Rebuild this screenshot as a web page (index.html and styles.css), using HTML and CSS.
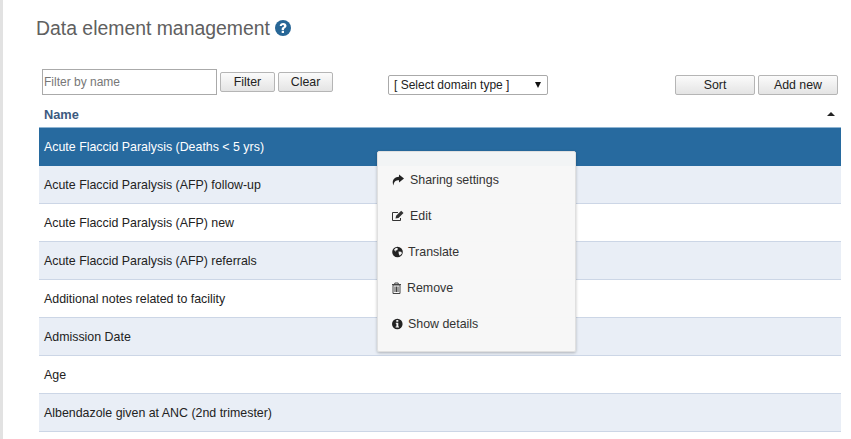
FILE: index.html
```html
<!DOCTYPE html>
<html lang="en">
<head>
    <meta charset="UTF-8">
    <title>Data element management</title>
    <link rel="stylesheet" href="styles.css">
</head>
<body>
    <div class="container">
        <h1 class="title">Data element management
            <svg class="help" viewBox="0 0 16 16"><circle cx="8" cy="8" r="8" fill="#276696"/><path d="M4.700 6C4.800 4.100 6.200 3 8.200 3c1.900 0 3.300 1.100 3.300 2.800 0 1.300-.8 2-1.700 2.500-.6.4-.8.6-.8 1.200v.4H6.700v-.7c0-1 .5-1.600 1.300-2.100.6-.4 1-.7 1-1.200 0-.6-.4-.9-1-.9-.7 0-1.100.4-1.200 1.100zM6.700 10.800h2.300v2.200H6.700z" fill="#fff"/></svg>
        </h1>
        <div class="toolbar">
            <div class="filter-group">
                <input type="text" class="filter-input" placeholder="Filter by name">
                <button class="btn btn-small">Filter</button>
                <button class="btn btn-small">Clear</button>
            </div>
            <div class="fake-select">[ Select domain type ]<span class="select-arrow"></span></div>
            <div class="action-group">
                <button class="btn btn-wide">Sort</button>
                <button class="btn btn-wide">Add new</button>
            </div>
        </div>
        <div class="list-head">
            <span>Name</span>
            <span class="sort-arrow"></span>
        </div>
        <div class="list">
            <div class="row selected">Acute Flaccid Paralysis (Deaths &lt; 5 yrs)</div>
            <div class="row">Acute Flaccid Paralysis (AFP) follow-up</div>
            <div class="row">Acute Flaccid Paralysis (AFP) new</div>
            <div class="row">Acute Flaccid Paralysis (AFP) referrals</div>
            <div class="row">Additional notes related to facility</div>
            <div class="row">Admission Date</div>
            <div class="row">Age</div>
            <div class="row">Albendazole given at ANC (2nd trimester)</div>
        </div>
    </div>

    <ul class="menu">
        <li>
            <svg class="icon" viewBox="0 0 12 12"><path d="M7 .5L12 4.500 7 8.500V6.200C4 6.200 1.800 7.300 1.500 11.500-.6 7 2 2.800 7 2.700z" fill="#222"/></svg>
            <span>Sharing settings</span>
        </li>
        <li>
            <svg class="icon" viewBox="0 0 12 12"><path d="M8.500 8v2.500H.5V2.500H6" fill="none" stroke="#333"/><path d="M3.500 8.500l.6-2.800L9.200.8l2.300 2.200-5 5z" fill="#333"/></svg>
            <span>Edit</span>
        </li>
        <li class="tight">
            <svg class="icon" viewBox="0 0 12 12"><circle cx="5.500" cy="6" r="5.300" fill="#222"/><path d="M2 3.800L4 1.800l2 .7-.8 1.800L3.500 4.500 3.700 6zM6.500 5.500l2.700.3.800 1.500-2.200 2.500L6.800 8z" fill="#f5f5f5"/></svg>
            <span>Translate</span>
        </li>
        <li class="tighter">
            <svg class="icon" viewBox="0 0 12 12"><path d="M0 2.500h9M2.800 2.500V1h3.400v1.500" fill="none" stroke="#444"/><path d="M1 3h7v8.500H1z" fill="none" stroke="#444"/><path d="M3 4.500v5.500M4.500 4.500v5.500M6 4.500v5.500" stroke="#444"/></svg>
            <span>Remove</span>
        </li>
        <li class="tight">
            <svg class="icon" viewBox="0 0 12 12"><circle cx="5.300" cy="6" r="5.300" fill="#222"/><path d="M4.300 2h2v1.700h-2zM3.800 4.800h2.500v3.600H7v1H3.600v-1h.8V5.800h-.6z" fill="#f5f5f5"/></svg>
            <span>Show details</span>
        </li>
    </ul>
</body>
</html>
```

FILE: styles.css
```css
body {
    margin: 0;
    font-family: "Liberation Sans", Arial, sans-serif;
    font-size: 12.4px;
    color: #222;
    background: #fff;
    overflow: hidden;
}

.container {
    height: 439px;
    box-sizing: border-box;
    padding: 0 10px 0 36px;
    border-left: 3px solid #e2e2e2;
}

.title {
    display: flex;
    align-items: center;
    gap: 5px;
    height: 20px;
    margin: 0 0 0 -3px;
    padding-top: 18px;
    font-size: 19.4px;
    font-weight: normal;
    color: #606060;
}

.help {
    width: 16px;
    height: 16px;
}

.toolbar {
    display: flex;
    align-items: flex-end;
    height: 26px;
    margin-top: 31px;
    padding-left: 3px;
}

.filter-group {
    display: flex;
    align-items: center;
    gap: 3px;
    width: 346px;
}

.filter-input {
    width: 175px;
    height: 26px;
    box-sizing: border-box;
    padding: 0 1px;
    border: 1px solid #aaa;
    font-family: inherit;
    font-size: 12px;
}

.filter-input::placeholder {
    color: #777;
}

.btn {
    height: 20px;
    padding: 0;
    border: 1px solid #b5b5b5;
    border-radius: 2px;
    background: linear-gradient(#fbfbfb, #e4e4e4);
    font-family: inherit;
    font-size: 12.35px;
    color: #222;
}

.btn-small {
    width: 55px;
}

.btn-wide {
    width: 80px;
}

.fake-select {
    position: relative;
    width: 160px;
    height: 20px;
    box-sizing: border-box;
    padding-left: 5px;
    border: 1px solid #aaa;
    border-radius: 2px;
    font-size: 12px;
    line-height: 18px;
}

.select-arrow {
    position: absolute;
    right: 6px;
    top: 6px;
    border-left: 3px solid transparent;
    border-right: 3px solid transparent;
    border-top: 6px solid #111;
}

.action-group {
    display: flex;
    gap: 3px;
    margin-left: auto;
    padding-right: 3px;
}

.list-head {
    display: flex;
    align-items: center;
    justify-content: space-between;
    height: 32px;
    box-sizing: border-box;
    padding: 7px 6px 0 5px;
    font-size: 12.8px;
    font-weight: bold;
    color: #3c5a80;
}

.sort-arrow {
    margin-top: -1px;
    border-left: 4px solid transparent;
    border-right: 4px solid transparent;
    border-bottom: 4px solid #222;
}

.list {
    border-top: 1px solid #8fb5d3;
}

.row {
    height: 38px;
    box-sizing: border-box;
    padding-left: 5px;
    border-bottom: 1px solid #ccd6e6;
    line-height: 38px;
}

.row:nth-child(even) {
    background: #e9eef6;
}

.row.selected {
    background: #276a9f;
    border-bottom-color: #276a9f;
    color: #fff;
}

.menu {
    position: absolute;
    left: 377px;
    top: 151px;
    width: 199px;
    height: 201px;
    box-sizing: border-box;
    margin: 0;
    padding: 10px 0 0 14px;
    list-style: none;
    background: rgba(247, 247, 247, 0.98);
    border: 1px solid #e0e0e0;
    border-radius: 2px;
    box-shadow: 0 1px 3px rgba(0, 0, 0, 0.25);
    color: #333;
}

.menu li {
    display: flex;
    align-items: center;
    height: 36px;
}

.icon {
    width: 12px;
    height: 12px;
    margin-right: 6px;
}

.tight .icon {
    margin-right: 4px;
}

.tighter .icon {
    margin-right: 3px;
}
```
